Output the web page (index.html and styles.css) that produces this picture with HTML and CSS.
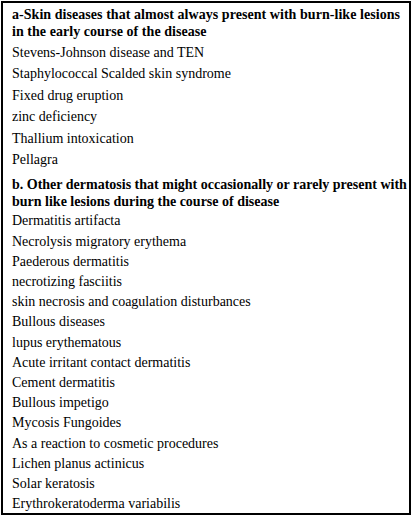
FILE: index.html
```html
<!DOCTYPE html>
<html>
<head>
<meta charset="utf-8">
<link rel="stylesheet" href="styles.css">
</head>
<body>
<div class="box">
  <div class="head head-a">a-Skin diseases that almost always present with burn-like lesions in the early course of the disease</div>
  <ul class="list list-a">
    <li>Stevens-Johnson disease and TEN</li>
    <li>Staphylococcal Scalded skin syndrome</li>
    <li>Fixed drug eruption</li>
    <li>zinc deficiency</li>
    <li>Thallium intoxication</li>
    <li>Pellagra</li>
  </ul>
  <div class="head head-b">b. Other dermatosis that might occasionally or rarely present with burn like lesions during the course of disease</div>
  <ul class="list list-b">
    <li>Dermatitis artifacta</li>
    <li>Necrolysis migratory erythema</li>
    <li>Paederous dermatitis</li>
    <li>necrotizing fasciitis</li>
    <li>skin necrosis and coagulation disturbances</li>
    <li>Bullous diseases</li>
    <li>lupus erythematous</li>
    <li>Acute irritant contact dermatitis</li>
    <li>Cement dermatitis</li>
    <li>Bullous impetigo</li>
    <li>Mycosis Fungoides</li>
    <li>As a reaction to cosmetic procedures</li>
    <li>Lichen planus actinicus</li>
    <li>Solar keratosis</li>
    <li>Erythrokeratoderma variabilis</li>
  </ul>
</div>
</body>
</html>
```
FILE: styles.css
```css
html, body {
  margin: 0;
  padding: 0;
  background: #fff;
}
body {
  padding: 1px;
  font-family: "Liberation Serif", "Times New Roman", serif;
  color: #000;
  font-size: 14px;
}
.box {
  width: 410px;
  height: 514px;
  box-sizing: border-box;
  border: 2px solid #000;
  padding: 3px 0 0 9px;
}
.head {
  font-weight: bold;
  line-height: 17px;
}
.head-a {
  letter-spacing: 0.05px;
}
.head-b {
  margin-top: 6px;
}
.list {
  list-style: none;
  margin: 0;
  padding: 0;
}
.list li {
  line-height: 21.4px;
}
.list-a { padding-top: 2px; }
.list-b { padding-top: 1px; }
.list-b li {
  line-height: 20.2px;
}
```
